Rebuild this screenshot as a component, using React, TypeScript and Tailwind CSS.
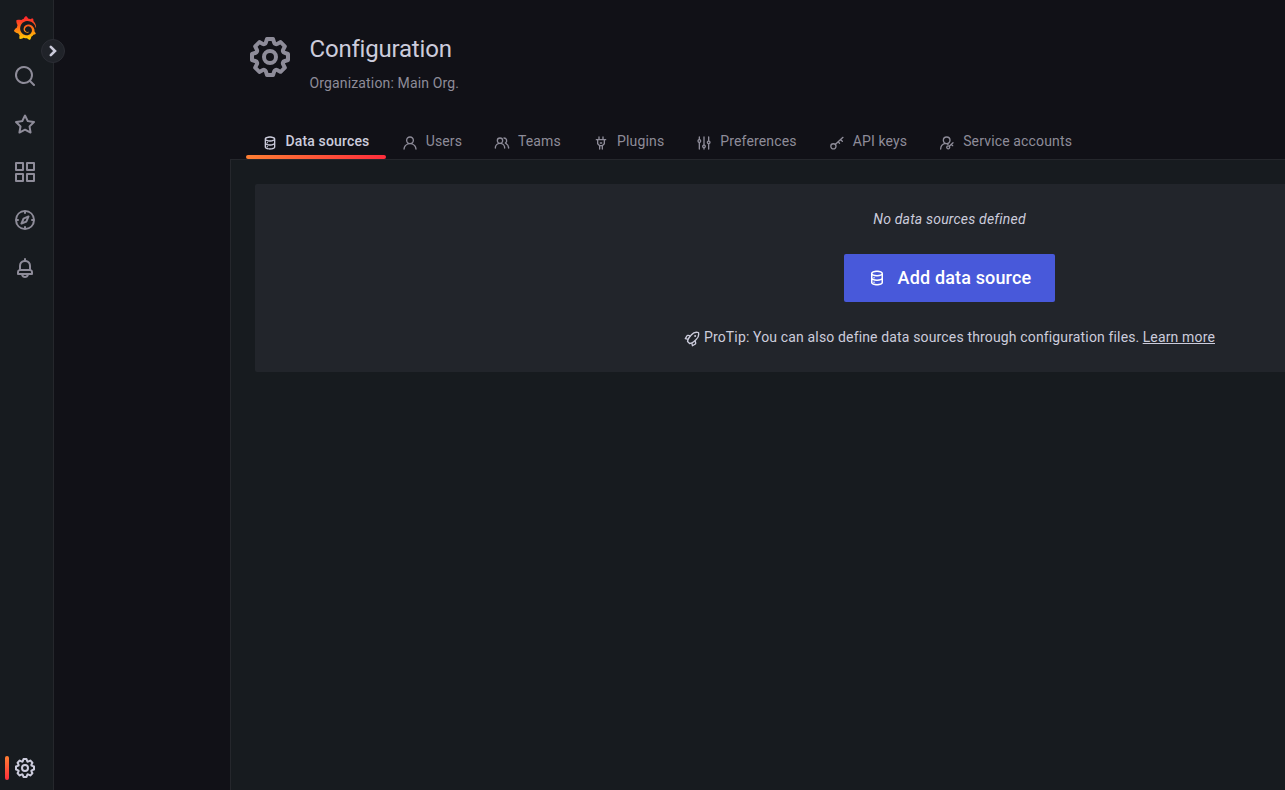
import { SiGrafana } from "react-icons/si";

const icons = {
  search: "M21.71,20.29,18,16.61A9,9,0,1,0,16.61,18l3.68,3.68a1,1,0,0,0,1.42,0A1,1,0,0,0,21.71,20.29ZM11,18a7,7,0,1,1,7-7A7,7,0,0,1,11,18Z",
  star: "M22,9.67A1,1,0,0,0,21.14,9l-5.69-.83L12.9,3a1,1,0,0,0-1.8,0L8.55,8.16,2.86,9a1,1,0,0,0-.81.68,1,1,0,0,0,.25,1l4.13,4-1,5.68A1,1,0,0,0,6.9,21.44L12,18.77l5.1,2.67a.93.93,0,0,0,.46.12,1,1,0,0,0,.59-.19,1,1,0,0,0,.4-1l-1-5.68,4.13-4A1,1,0,0,0,22,9.67Zm-6.15,4a1,1,0,0,0-.29.88l.72,4.2-3.76-2a1.06,1.06,0,0,0-.94,0l-3.76,2,.72-4.2a1,1,0,0,0-.29-.88l-3-3,4.21-.61a1,1,0,0,0,.76-.55L12,5.7l1.88,3.82a1,1,0,0,0,.76.55l4.21.61Z",
  apps: "M10,13H3a1,1,0,0,0-1,1v7a1,1,0,0,0,1,1h7a1,1,0,0,0,1-1V14A1,1,0,0,0,10,13ZM9,20H4V15H9ZM21,2H14a1,1,0,0,0-1,1v7a1,1,0,0,0,1,1h7a1,1,0,0,0,1-1V3A1,1,0,0,0,21,2ZM20,9H15V4h5Zm1,4H14a1,1,0,0,0-1,1v7a1,1,0,0,0,1,1h7a1,1,0,0,0,1-1V14A1,1,0,0,0,21,13Zm-1,7H15V15h5ZM10,2H3A1,1,0,0,0,2,3v7a1,1,0,0,0,1,1h7a1,1,0,0,0,1-1V3A1,1,0,0,0,10,2ZM9,9H4V4H9Z",
  compass: "M12,2A10,10,0,1,0,22,12,10,10,0,0,0,12,2Zm1,17.93V19a1,1,0,0,0-2,0v.93A8,8,0,0,1,4.07,13H5a1,1,0,0,0,0-2H4.07A8,8,0,0,1,11,4.07V5a1,1,0,0,0,2,0V4.07A8,8,0,0,1,19.93,11H19a1,1,0,0,0,0,2h.93A8,8,0,0,1,13,19.93ZM15.14,7.55l-5,2.12a1,1,0,0,0-.52.52l-2.12,5a1,1,0,0,0,.21,1.1,1,1,0,0,0,.7.3.93.93,0,0,0,.4-.09l5-2.12a1,1,0,0,0,.52-.52l2.12-5a1,1,0,0,0-1.31-1.31Zm-2.49,5.1-2.28,1,1-2.28,2.28-1Z",
  bell: "M18,13.18V10a6,6,0,0,0-5-5.91V3a1,1,0,0,0-2,0V4.09A6,6,0,0,0,6,10v3.18A3,3,0,0,0,4,16v2a1,1,0,0,0,1,1H8.14a4,4,0,0,0,7.72,0H19a1,1,0,0,0,1-1V16A3,3,0,0,0,18,13.18ZM8,10a4,4,0,0,1,8,0v3H8Zm4,10a2,2,0,0,1-1.72-1h3.44A2,2,0,0,1,12,20Zm6-3H6V16a1,1,0,0,1,1-1H17a1,1,0,0,1,1,1Z",
  cog: "M21.32,9.55l-1.89-.63.89-1.78A1,1,0,0,0,20.13,6L18,3.87a1,1,0,0,0-1.15-.19l-1.78.89-.63-1.89A1,1,0,0,0,13.5,2h-3a1,1,0,0,0-.95.68L8.92,4.57,7.14,3.68A1,1,0,0,0,6,3.87L3.87,6a1,1,0,0,0-.19,1.15l.89,1.78-1.89.63A1,1,0,0,0,2,10.5v3a1,1,0,0,0,.68.95l1.89.63-.89,1.78A1,1,0,0,0,3.87,18L6,20.13a1,1,0,0,0,1.15.19l1.78-.89.63,1.89a1,1,0,0,0,.95.68h3a1,1,0,0,0,.95-.68l.63-1.89,1.78.89A1,1,0,0,0,18,20.13L20.13,18a1,1,0,0,0,.19-1.15l-.89-1.78,1.89-.63A1,1,0,0,0,22,13.5v-3A1,1,0,0,0,21.32,9.55ZM20,12.78l-1.2.4A2,2,0,0,0,17.64,16l.57,1.14-1.1,1.1L16,17.64a2,2,0,0,0-2.79,1.16l-.4,1.2H11.22l-.4-1.2A2,2,0,0,0,8,17.64l-1.14.57-1.1-1.1L6.36,16A2,2,0,0,0,5.2,13.18L4,12.78V11.22l1.2-.4A2,2,0,0,0,6.36,8L5.79,6.89l1.1-1.1L8,6.36A2,2,0,0,0,10.82,5.2l.4-1.2h1.56l.4,1.2A2,2,0,0,0,16,6.36l1.14-.57,1.1,1.1L17.64,8a2,2,0,0,0,1.16,2.79l1.2.4ZM12,8a4,4,0,1,0,4,4A4,4,0,0,0,12,8Zm0,6a2,2,0,1,1,2-2A2,2,0,0,1,12,14Z",
  database: "M8,16.5a1,1,0,1,0,1,1A1,1,0,0,0,8,16.5ZM12,2C8,2,4,3.37,4,6V18c0,2.63,4,4,8,4s8-1.37,8-4V6C20,3.37,16,2,12,2Zm6,16c0,.71-2.28,2-6,2s-6-1.29-6-2V14.73A13.16,13.16,0,0,0,12,16a13.16,13.16,0,0,0,6-1.27Zm0-6c0,.71-2.28,2-6,2s-6-1.29-6-2V8.73A13.16,13.16,0,0,0,12,10a13.16,13.16,0,0,0,6-1.27ZM12,8C8.28,8,6,6.71,6,6s2.28-2,6-2,6,1.29,6,2S15.72,8,12,8ZM8,10.5a1,1,0,1,0,1,1A1,1,0,0,0,8,10.5Z",
  user: "M15.71,12.71a6,6,0,1,0-7.42,0,10,10,0,0,0-6.22,8.18,1,1,0,0,0,2,.22,8,8,0,0,1,15.9,0,1,1,0,0,0,1,.89h.11a1,1,0,0,0,.88-1.1A10,10,0,0,0,15.71,12.71ZM12,12a4,4,0,1,1,4-4A4,4,0,0,1,12,12Z",
  users: "M12.3,12.22A4.92,4.92,0,0,0,14,8.5a5,5,0,0,0-10,0,4.92,4.92,0,0,0,1.7,3.72A8,8,0,0,0,1,19.5a1,1,0,0,0,2,0,6,6,0,0,1,12,0,1,1,0,0,0,2,0A8,8,0,0,0,12.3,12.22ZM9,11.5a3,3,0,1,1,3-3A3,3,0,0,1,9,11.5Zm9.74.32A5,5,0,0,0,15,3.5a1,1,0,0,0,0,2,3,3,0,0,1,3,3,3,3,0,0,1-1.5,2.59,1,1,0,0,0-.5.84,1,1,0,0,0,.45.86l.39.26.13.07a7,7,0,0,1,4,6.38,1,1,0,0,0,2,0A9,9,0,0,0,18.74,11.82Z",
  plug: "M19,6H16V3a1,1,0,0,0-2,0V6H10V3A1,1,0,0,0,8,3V6H5A1,1,0,0,0,5,8H6v5a1,1,0,0,0,.29.71L9,16.41V21a1,1,0,0,0,2,0V17h2v4a1,1,0,0,0,2,0V16.41l2.71-2.7A1,1,0,0,0,18,13V8h1a1,1,0,0,0,0-2Zm-3,6.59L13.59,15H10.41L8,12.59V8h8ZM11,13h2a1,1,0,0,0,0-2H11a1,1,0,0,0,0,2Z",
  sliders: "M20,8.18V3a1,1,0,0,0-2,0V8.18a3,3,0,0,0,0,5.64V21a1,1,0,0,0,2,0V13.82a3,3,0,0,0,0-5.64ZM19,12a1,1,0,1,1,1-1A1,1,0,0,1,19,12Zm-6,2.18V3a1,1,0,0,0-2,0V14.18a3,3,0,0,0,0,5.64V21a1,1,0,0,0,2,0V19.82a3,3,0,0,0,0-5.64ZM12,18a1,1,0,1,1,1-1A1,1,0,0,1,12,18ZM6,6.18V3A1,1,0,0,0,4,3V6.18a3,3,0,0,0,0,5.64V21a1,1,0,0,0,2,0V11.82A3,3,0,0,0,6,6.18ZM5,10A1,1,0,1,1,6,9,1,1,0,0,1,5,10Z",
  rocket: "M22.601 2.062a1 1 0 0 0-.713-.713A11.252 11.252 0 0 0 10.47 4.972L9.354 6.296 6.75 5.668a2.777 2.777 0 0 0-3.387 1.357l-2.2 3.9a1 1 0 0 0 .661 1.469l3.073.659a13.42 13.42 0 0 0-.555 2.434 1 1 0 0 0 .284.836l3.1 3.1a1 1 0 0 0 .708.293c.028 0 .057-.001.086-.004a12.169 12.169 0 0 0 2.492-.49l.644 3.004a1 1 0 0 0 1.469.661l3.905-2.202a3.035 3.035 0 0 0 1.375-3.304l-.668-2.76 1.237-1.137A11.204 11.204 0 0 0 22.6 2.062ZM3.572 10.723l1.556-2.76a.826.826 0 0 1 1.07-.375l1.718.416-.65.772a13.095 13.095 0 0 0-1.59 2.398Zm12.47 8.222-2.715 1.532-.43-2.005a11.34 11.34 0 0 0 2.414-1.62l.743-.683.404 1.664a1.041 1.041 0 0 1-.416 1.112Zm1.615-6.965-3.685 3.386a9.773 9.773 0 0 1-5.17 2.304l-2.405-2.404a10.932 10.932 0 0 1 2.401-5.206l1.679-1.993a.964.964 0 0 0 .078-.092L11.99 6.27a9.278 9.278 0 0 1 8.81-3.12 9.218 9.218 0 0 1-3.143 8.829Zm-.923-6.164a1.5 1.5 0 1 0 1.5 1.5 1.5 1.5 0 0 0-1.5-1.5Z",
};

// Icons drawn with strokes instead of filled outlines.
const strokeIcons = {
  key: { width: 2, d: "M10.5 17a3.9 3.9 0 1 1-7.8 0a3.9 3.9 0 0 1 7.800 0ZM9.700 14L21 3.500M17.500 7L20 9.500M14 10.500l1.800 1.800" },
  account: { width: 2, d: "M16.500 8a5 5 0 1 1-10 0a5 5 0 0 1 10 0ZM2.500 21a9 9 0 0 1 6.500-8.500M16 18.500a2.200 2.200 0 1 1-4.400 0a2.200 2.200 0 0 1 4.400 0ZM15.500 17L21 11.500M18.500 14l2 2M11.500 13l2 1" },
  angleRight: { width: 2.6, d: "M9.800 7.800L14 12L9.800 16.200" },
};

type IconName = keyof typeof icons | keyof typeof strokeIcons;

function Icon({ name, className }: { name: IconName; className: string }) {
  const stroke = strokeIcons[name as keyof typeof strokeIcons];
  return (
    <svg viewBox="0 0 24 24" className={`block shrink-0 ${className}`} aria-hidden="true">
      {stroke ? (
        <path fill="none" stroke="currentColor" strokeWidth={stroke.width} strokeLinecap="round" d={stroke.d} />
      ) : (
        <path fill="currentColor" d={icons[name as keyof typeof icons]} />
      )}
    </svg>
  );
}

const navItems: IconName[] = ["search", "star", "apps", "compass", "bell"];

const tabs: { icon: IconName; label: string; width: string }[] = [
  { icon: "database", label: "Data sources", width: "w-[139.7px]" },
  { icon: "user", label: "Users", width: "w-[92.2px]" },
  { icon: "users", label: "Teams", width: "w-[99.2px]" },
  { icon: "plug", label: "Plugins", width: "w-[103.2px]" },
  { icon: "sliders", label: "Preferences", width: "w-[132.4px]" },
  { icon: "key", label: "API keys", width: "w-[110.5px]" },
  { icon: "account", label: "Service accounts", width: "w-[165px]" },
];

function Sidebar() {
  return (
    <nav className="relative z-10 flex w-[54px] shrink-0 flex-col border-r border-[#25272c] bg-[#171b1f] pt-1 text-[#8e8c99]">
      <svg className="absolute size-0">
        <defs>
          <linearGradient id="brand" x1="0" y1="1" x2="0" y2="0">
            <stop offset="0" stopColor="#ffd500" />
            <stop offset="0.35" stopColor="#ff9010" />
            <stop offset="0.7" stopColor="#ff4a20" />
            <stop offset="1" stopColor="#ff1f30" />
          </linearGradient>
        </defs>
      </svg>
      <a className="flex h-12 w-[50px] items-center justify-center">
        <SiGrafana size={24} style={{ fill: "url(#brand)" }} />
      </a>
      {navItems.map((name) => (
        <a key={name} className="flex h-12 w-[50px] items-center justify-center">
          <Icon name={name} className="size-6" />
        </a>
      ))}
      <a className="mt-auto mb-[-2px] flex h-12 items-center pl-[5px] text-[#ccccdc]">
        <span className="h-6 w-1 rounded-[2px] bg-[linear-gradient(180deg,#ff7f33_0%,#ff2d3c_100%)]" />
        <Icon name="cog" className="ml-1 size-6" />
      </a>
      <button className="absolute top-[39px] left-[41px] flex size-6 items-center justify-center rounded-full border border-[#2b2d34] bg-[#202329] text-[#ccccdc]">
        <Icon name="angleRight" className="size-6" />
      </button>
    </nav>
  );
}

export default function App() {
  return (
    <div className="flex h-[790px] w-[1285px] overflow-hidden bg-[#111117] font-['Roboto',sans-serif] text-sm leading-[22px] tracking-[0.15px] text-[#ccccdc]">
      <Sidebar />
      <main className="ml-44 flex w-[1438px] shrink-0 flex-col">
        <header className="flex h-[123px] items-start pt-8 pl-4">
          <Icon name="cog" className="mt-px size-12 text-[#8e8c99]" />
          <div className="ml-[15.5px] pt-0.5">
            <h1 className="text-2xl leading-[30px] font-normal tracking-[-0.2px]">Configuration</h1>
            <p className="mt-2 text-[#8e8c99]">Organization: Main Org.</p>
          </div>
        </header>
        <div className="flex h-9 pl-4">
          {tabs.map((tab, i) => (
            <a key={tab.label} className={`relative flex shrink-0 pl-4 ${tab.width} ${i === 0 ? "font-medium text-[#ccccdc]" : "text-[#8e8c99]"}`}>
              <Icon name={tab.icon} className="mt-3 size-4" />
              <span className={`pt-[7px] whitespace-nowrap ${i === 0 ? "ml-[7.5px]" : "ml-2"}`}>{tab.label}</span>
              {i === 0 && <span className="absolute bottom-0 left-0 h-1 w-full rounded-[2px] bg-[linear-gradient(90deg,#ff7f33_0%,#ff2d3c_100%)]" />}
            </a>
          ))}
        </div>
        <section className="grow border-t border-l border-[#25272c] bg-[#171b1f] p-6">
          <div className="flex h-[188px] flex-col items-center rounded-[2px] bg-[#22252b] pt-6">
            <em className="tracking-[0.2px]">No data sources defined</em>
            <button className="mt-6 flex h-12 w-[211px] items-center rounded-[2px] bg-[#4859da] pl-6 text-lg font-medium text-white">
              <Icon name="database" className="size-[18px]" />
              <span className="ml-[11.6px] whitespace-nowrap">Add data source</span>
            </button>
            <p className="mt-6 flex whitespace-pre">
              <Icon name="rocket" className="mt-[5px] mr-1 size-4" />
              <span>ProTip: You can also define data sources through configuration files. </span>
              <a className="-ml-[0.4px] underline">Learn more</a>
            </p>
          </div>
        </section>
      </main>
    </div>
  );
}
